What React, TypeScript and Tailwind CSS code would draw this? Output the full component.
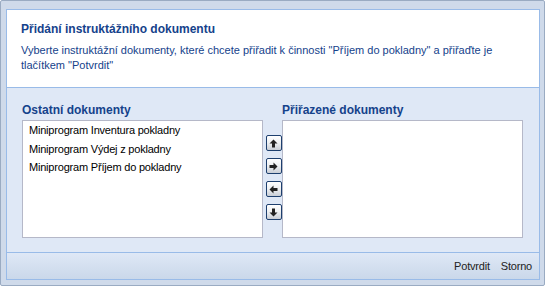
import React from 'react';

const FONT = { fontFamily: '"Liberation Sans", Arial, sans-serif' };

const leftItems = [
  'Miniprogram Inventura pokladny',
  'Miniprogram Výdej z pokladny',
  'Miniprogram Příjem do pokladny',
];

function ArrowButton({ dir }: { dir: 'up' | 'right' | 'left' | 'down' }) {
  const rot = { up: 0, right: 90, down: 180, left: 270 }[dir];
  return (
    <button className="w-[16px] h-[16px] border border-[#1d3f6e] rounded-[2px] bg-gradient-to-b from-[#ffffff] via-[#eef0f2] to-[#c9ced6] flex items-center justify-center">
      <svg width="9" height="9" viewBox="0 0 9 9" style={{ transform: `rotate(${rot}deg)` }}>
        <path d="M4.5 0.5 L8.5 4.5 L6 4.5 L6 8.5 L3 8.5 L3 4.5 L0.5 4.5 Z" fill="#222" />
      </svg>
    </button>
  );
}

export default function App() {
  return (
    <div
      className="w-[545px] h-[286px] bg-[#cfdaea] border border-[#9aabc2] rounded-[2px] pl-[5px] pr-[4px] pt-[8px] pb-[6px] text-[11px]"
      style={FONT}
    >
      <div className="h-[271px] border border-[#99bbe8] flex flex-col">
        <div className="bg-white h-[78px] px-[14px] pt-[11px] border-b border-[#99bbe8]">
          <div className="font-bold text-[#15428b] text-[12px] leading-[16px]">Přidání instruktážního dokumentu</div>
          <div className="text-[#15428b] leading-[15px] mt-[6px] pr-[20px]">
            Vyberte instruktážní dokumenty, které chcete přiřadit k činnosti "Příjem do pokladny" a přiřaďte je
            tlačítkem "Potvrdit"
          </div>
        </div>
        <div className="flex-1 bg-[#dfe8f6] pl-[15px] pt-[14px] flex">
          <div className="flex flex-col w-[241px]">
            <div className="font-bold text-[#15428b] text-[12px] leading-[16px] h-[18px]">Ostatní dokumenty</div>
            <div className="h-[118px] bg-white border border-[#b5b8c8] px-[6px]">
              {leftItems.map((t) => (
                <div key={t} className="leading-[18.5px] text-black tracking-[-0.2px]">
                  {t}
                </div>
              ))}
            </div>
          </div>
          <div className="w-[19px] flex flex-col items-center gap-[7px] pt-[33px] pl-[2px]">
            <ArrowButton dir="up" />
            <ArrowButton dir="right" />
            <ArrowButton dir="left" />
            <ArrowButton dir="down" />
          </div>
          <div className="flex flex-col w-[241px]">
            <div className="font-bold text-[#15428b] text-[12px] leading-[16px] h-[18px]">Přiřazené dokumenty</div>
            <div className="h-[118px] bg-white border border-[#b5b8c8]" />
          </div>
        </div>
        <div className="h-[27px] border-t border-[#99bbe8] bg-gradient-to-b from-[#dfe8f6] to-[#cad8ea] flex items-center justify-end gap-[11px] pr-[7px] text-[#222] tracking-[-0.2px]">
          <span>Potvrdit</span>
          <span>Storno</span>
        </div>
      </div>
    </div>
  );
}
